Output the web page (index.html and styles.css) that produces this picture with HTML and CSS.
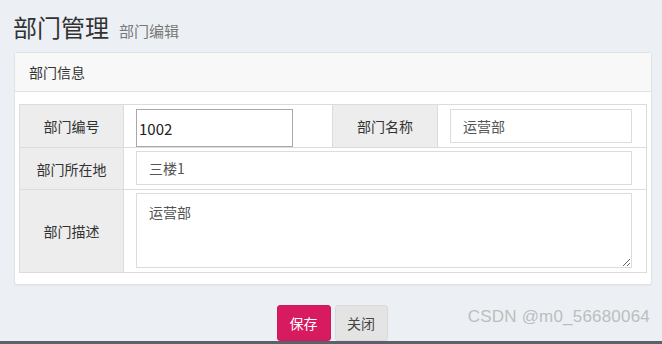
FILE: index.html
```html
<!DOCTYPE html>
<html lang="zh-CN">
<head>
<meta charset="utf-8">
<title>部门管理</title>
<link rel="stylesheet" href="styles.css">
</head>
<body>
<div class="page">
  <div class="content-header">
    <h1 class="title">部门管理<small class="subtitle">部门编辑</small></h1>
  </div>
  <div class="panel">
    <div class="panel-heading">部门信息</div>
    <div class="panel-body">
      <table class="form-table">
        <colgroup>
          <col class="col-label1">
          <col class="col-field1">
          <col class="col-label2">
          <col class="col-field2">
        </colgroup>
        <tr class="row-1">
          <td class="label">部门编号</td>
          <td class="field field-a"><input class="input input-focus" type="text" value="1002"></td>
          <td class="label">部门名称</td>
          <td class="field field-b"><input class="input" type="text" value="运营部"></td>
        </tr>
        <tr class="row-2">
          <td class="label">部门所在地</td>
          <td class="field field-wide" colspan="3"><input class="input" type="text" value="三楼1"></td>
        </tr>
        <tr class="row-3">
          <td class="label">部门描述</td>
          <td class="field field-wide" colspan="3"><textarea class="textarea">运营部</textarea></td>
        </tr>
      </table>
    </div>
  </div>
  <div class="actions">
    <button class="btn btn-save" type="button">保存</button>
    <button class="btn btn-close" type="button">关闭</button>
  </div>
  <div class="bottom-line"></div>
  <div class="watermark">CSDN @m0_56680064</div>
</div>
</body>
</html>
```

FILE: styles.css
```css
html, body {
  margin: 0;
  padding: 0;
}
body {
  background: #ecf0f5;
  font-family: "Noto Sans CJK SC", "Liberation Sans", sans-serif;
  color: #333;
  font-size: 14px;
}
.page {
  position: relative;
  height: 344px;
  display: flex;
  flex-direction: column;
  overflow: hidden;
}
.content-header {
  padding: 11px 13px 0;
  height: 53px;
  box-sizing: border-box;
}
.title {
  margin: 0;
  font-size: 24px;
  font-weight: 400;
  line-height: 32px;
  color: #333;
}
.subtitle {
  font-size: 15px;
  color: #777;
  margin-left: 10px;
}
.panel {
  margin: 0 10px 0 14px;
  background: #fff;
  border: 1px solid #e3e3e3;
  border-radius: 3px;
  box-shadow: 0 1px 1px rgba(0,0,0,0.04);
}
.panel-heading {
  height: 38px;
  line-height: 38px;
  padding: 0 14px;
  background: #f8f8f8;
  border-bottom: 1px solid #e2e2e2;
  font-size: 14px;
  color: #333;
}
.panel-body {
  padding: 12px 4px 11px;
}
.form-table {
  width: 100%;
  border-collapse: collapse;
  table-layout: fixed;
  border: 1px solid #dcdcdc;
}
.col-label1 { width: 104px; }
.col-field1 { width: 209px; }
.col-label2 { width: 105px; }
.form-table td {
  border: 1px solid #dcdcdc;
  padding: 0;
}
.label {
  background: #ededed;
  text-align: center;
  font-size: 14px;
  color: #333;
}
.field-a {
  padding: 4px 0 0 12px !important;
  vertical-align: top;
}
.field-b {
  padding: 4px 14px 0 12px !important;
  vertical-align: top;
}
.field-wide {
  padding: 3px 14px 4px 12px !important;
}
.input {
  display: block;
  box-sizing: border-box;
  width: 100%;
  height: 34px;
  margin: 0;
  padding: 0 12px;
  border: 1px solid #dcdcdc;
  background: #fff;
  font-family: "Noto Sans CJK SC", "Liberation Sans", sans-serif;
  font-size: 14px;
  color: #555;
  outline: none;
}
.input-focus {
  width: 157px;
  height: 38px;
  padding: 0 2px;
  border-color: #a9a9a9;
  font-size: 15px;
  color: #222;
}
.textarea {
  display: block;
  box-sizing: border-box;
  width: 100%;
  height: 75px;
  margin: 0;
  padding: 8px 12px;
  border: 1px solid #dcdcdc;
  font-family: "Noto Sans CJK SC", "Liberation Sans", sans-serif;
  font-size: 14px;
  color: #555;
  resize: both;
  outline: none;
}
.actions {
  display: flex;
  justify-content: center;
  gap: 4px;
  margin-top: 20px;
  padding-left: 2px;
}
.btn {
  height: 36px;
  padding: 0;
  border-radius: 3px;
  font-family: "Noto Sans CJK SC", "Liberation Sans", sans-serif;
  font-size: 14px;
  cursor: pointer;
}
.btn-save {
  width: 54px;
  background: #d81b60;
  border: 1px solid #ca195a;
  color: #fff;
}
.btn-close {
  width: 53px;
  background: #e4e4e4;
  border: 1px solid #dadada;
  color: #444;
}
.bottom-line {
  margin-top: auto;
  height: 3px;
  background: #5c6168;
}
.watermark {
  position: absolute;
  right: 12px;
  bottom: 17px;
  font-family: "Liberation Sans", sans-serif;
  font-size: 17px;
  color: #bdbdbd;
  letter-spacing: 0.2px;
}
```
